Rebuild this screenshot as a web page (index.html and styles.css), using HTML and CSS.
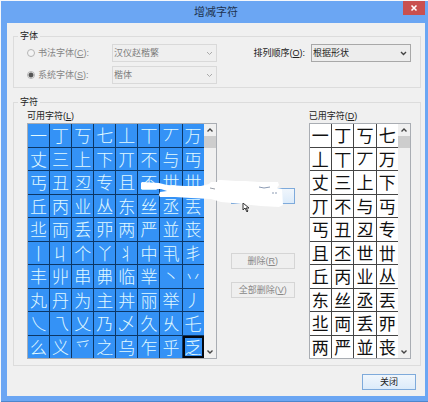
FILE: index.html
```html
<!DOCTYPE html>
<html lang="zh-CN">
<head>
  <meta charset="UTF-8">
  <meta name="viewport" content="width=device-width, initial-scale=1.0">
  <title>增减字符</title>
  <link rel="stylesheet" href="styles.css">
</head>
<body>
  <div class="dialog">
    <header class="title-bar">
      <h1>增减字符</h1>
      <button class="close-x" aria-label="关闭窗口">
        <svg width="8" height="8" viewBox="0 0 8 8"><path d="M1.5 1.5l5 5M6.5 1.5l-5 5" stroke="#fff" stroke-width="1.6"/></svg>
      </button>
    </header>

    <main class="client">
      <fieldset class="group">
        <legend>字体</legend>
        <div class="font-row">
          <div class="font-options">
            <label class="radio disabled"><input type="radio" name="font" disabled><span>书法字体(<u>C</u>):</span></label>
            <select class="combo" aria-label="书法字体" disabled><option>汉仪赵楷繁</option></select>
            <label class="radio disabled"><input type="radio" name="font" checked disabled><span>系统字体(<u>S</u>):</span></label>
            <select class="combo" aria-label="系统字体" disabled><option>楷体</option></select>
          </div>
          <div class="order">
            <label for="order">排列顺序(<u>O</u>):</label>
            <select class="combo" id="order"><option>根据形状</option></select>
          </div>
        </div>
      </fieldset>

      <fieldset class="group chars">
        <legend>字符</legend>
        <div class="chars-row">
          <section class="column">
            <h2>可用字符(<u>L</u>)</h2>
            <div class="list">
              <div class="cells available" id="available" role="listbox" aria-label="可用字符"></div>
              <div class="scrollbar">
                <button aria-label="向上"><svg width="8" height="6" viewBox="0 0 8 6"><path d="M1.5 4.5L4 2l2.5 2.5"/></svg></button>
                <span class="thumb"></span>
                <button aria-label="向下"><svg width="8" height="6" viewBox="0 0 8 6"><path d="M1.5 1.5L4 4l2.5-2.5"/></svg></button>
              </div>
            </div>
          </section>

          <div class="actions">
            <button class="btn hot add" aria-label="添加"></button>
            <button class="btn" disabled>删除(<u>R</u>)</button>
            <button class="btn" disabled>全部删除(<u>V</u>)</button>
          </div>

          <section class="column">
            <h2>已用字符(<u>D</u>)</h2>
            <div class="list">
              <div class="cells used" id="used" role="listbox" aria-label="已用字符"></div>
              <div class="scrollbar">
                <button aria-label="向上"><svg width="8" height="6" viewBox="0 0 8 6"><path d="M1.5 4.5L4 2l2.5 2.5"/></svg></button>
                <span class="thumb"></span>
                <button aria-label="向下"><svg width="8" height="6" viewBox="0 0 8 6"><path d="M1.5 1.5L4 4l2.5-2.5"/></svg></button>
              </div>
            </div>
          </section>

          <!-- Brush stroke and mouse pointer over the lists -->
          <svg class="scribble" width="144" height="36" viewBox="0 0 144 36">
            <path fill="#fff" d="M0 6L1 5 18 6 26 8 44 9 60 9 68 7 70 5 76 5 77 3 80 3 95 4 104 4 118 5 137 5 138 8 136 11 141 12 142 28 138 30 120 29 110 28 92 26 80 25 70 22 50 21 34 20 19 20 18 18 19 15 26 14 20 12 0 12z"/>
            <path fill="none" stroke="#8c9bb3" stroke-width="1" d="M118 10l5 1 6-1M131 16h2M134 16h2"/>
            <path fill="none" stroke="#9a9fa8" stroke-width="1" d="M69 11l5 1"/>
          </svg>
          <svg class="pointer" width="10" height="11" viewBox="0 0 10 11"><path d="M1 0v7l2-2 2 4 1-1-2-3h3z" fill="#fff" stroke="#333" stroke-width="1"/></svg>
        </div>
      </fieldset>

      <footer class="footer">
        <button class="btn hot close">关闭</button>
      </footer>
    </main>
  </div>

  <script>
    const chars = '一丁丂七丄丅丆万丈三上下丌不与丏丐丑丒专且丕世丗丘丙业丛东丝丞丟丠両丢丣两严並丧' +
      '丨丩个丫丬中丮丯丰丱串丳临丵丶丷丸丹为主丼丽举丿乀乁乂乃乄久乆乇么义乊之乌乍乎乏';

    // Fill a list with one cell per character
    function fillList(id, text) {
      const list = document.getElementById(id);
      for (const ch of text) {
        const cell = document.createElement('span');
        cell.className = 'cell';
        cell.setAttribute('role', 'option');
        cell.textContent = ch;
        list.appendChild(cell);
      }
    }

    fillList('available', chars);
    fillList('used', chars.slice(0, 40));
    document.getElementById('available').lastElementChild.classList.add('current');
  </script>
</body>
</html>
```

FILE: styles.css
```css
* {
  box-sizing: border-box;
}

body {
  margin: 0;
  background: #f4f7fb;
  color: #222;
  font-family: "Liberation Sans", "Noto Sans CJK SC", sans-serif;
  font-size: 9px;
  line-height: 12px;
}

button, select, input {
  font: inherit;
  color: inherit;
  margin: 0;
}

/* Window frame */
.dialog {
  margin: 1px 0 1px 1px;
  padding: 0 3px 5px 6px;
  background: #6ba6f3;
  border-bottom: 1px solid #4d86cc;
}

.title-bar {
  display: grid;
  grid-template-columns: 1fr auto 1fr;
  height: 22px;
}

.title-bar h1 {
  grid-column: 2;
  margin: 0;
  font-size: 11px;
  font-weight: normal;
  line-height: 22px;
  color: #1d3350;
}

.close-x {
  justify-self: end;
  display: flex;
  align-items: center;
  justify-content: center;
  width: 22px;
  height: 14px;
  padding: 0;
  border: none;
  background: #c9504f;
}

.client {
  padding: 7px 4px 6px 6px;
  background: #f0f0f0;
}

/* Group boxes */
.group {
  min-width: 0;
  margin: 0 0 8px;
  padding: 2px 9px 3px 13px;
  border: 1px solid #dcdcdc;
}

.group legend {
  margin-left: -9px;
  padding: 0 2px;
  height: 12px;
}

.chars {
  padding: 2px 9px 6px 13px;
}

.font-row {
  display: flex;
  justify-content: space-between;
}

.font-options {
  display: grid;
  grid-template-columns: 85px 105px;
  gap: 4px 0;
}

.radio, .order {
  display: flex;
  align-items: center;
}

.radio {
  gap: 3px;
}

.radio input {
  appearance: none;
  width: 8px;
  height: 8px;
  border: 1px solid #b5b5b5;
  border-radius: 50%;
  background: #f4f4f4;
}

.radio input:checked {
  background: radial-gradient(circle, #555 2px, #f4f4f4 3px);
}

.disabled {
  color: #858585;
}

.order {
  align-self: flex-start;
  gap: 6px;
}

.combo {
  appearance: none;
  width: 100%;
  height: 18px;
  padding: 0 1px;
  border: 1px solid #a8a8a8;
  border-radius: 0;
  background: #ededed url("data:image/svg+xml,%3Csvg xmlns='http://www.w3.org/2000/svg' width='7' height='5'%3E%3Cpath d='M1 1l2.5 2.5L6 1' fill='none' stroke='%23444' stroke-width='1.4'/%3E%3C/svg%3E") no-repeat right 3px center;
}

.order .combo {
  width: 100px;
}

.combo:disabled {
  border-color: #d9d9d9;
  background-color: #efefef;
  background-image: url("data:image/svg+xml,%3Csvg xmlns='http://www.w3.org/2000/svg' width='7' height='5'%3E%3Cpath d='M1 1l2.5 2.5L6 1' fill='none' stroke='%23aaa'/%3E%3C/svg%3E");
  color: #7d7d7d;
  opacity: 1;
}

/* Character lists */
.chars-row {
  position: relative;
  display: grid;
  grid-template-columns: 189fr 64px 102fr;
  gap: 14px;
}

.column h2 {
  margin: 0 0 1px;
  font-size: 9px;
  font-weight: normal;
}

.list {
  display: flex;
  height: 236px;
  border: 1px solid #a9adb3;
  background: #f0f0f0;
}

.cells {
  flex: 1;
  display: grid;
  grid-auto-rows: 1fr;
  gap: 1px;
  font-family: "Noto Sans CJK SC", sans-serif;
  font-size: 17px;
  line-height: 22px;
}

.available {
  grid-template-columns: repeat(8, 1fr);
  background: #0c3766;
  color: #e2faff;
  font-weight: 300;
}

.used {
  grid-template-columns: repeat(4, 1fr);
  background: #444;
  color: #111;
}

.cell {
  display: flex;
  align-items: center;
  justify-content: center;
  min-width: 0;
  min-height: 0;
  background: #fff;
}

.available .cell {
  background: #3492f6;
}

.available .current {
  border: 2px solid #05080f;
}

.scrollbar {
  display: flex;
  flex-direction: column;
  width: 12px;
}

.scrollbar button {
  display: flex;
  align-items: center;
  justify-content: center;
  height: 12px;
  padding: 0;
  border: none;
  background: none;
}

.scrollbar button:last-child {
  margin-top: auto;
}

.scrollbar path {
  fill: none;
  stroke: #444;
  stroke-width: 1.4;
}

.thumb {
  height: 12px;
  background: #cdcdcd;
}

/* Buttons */
.btn {
  height: 16px;
  padding: 0;
  border: 1px solid #acacac;
  background: #ebebeb;
  line-height: 14px;
}

.btn:disabled {
  border-color: #d5d5d5;
  background: #efefef;
  color: #888;
}

.hot {
  border-color: #7eaadb;
  background: linear-gradient(#f0f6fc, #dcebfa);
}

.actions {
  display: flex;
  flex-direction: column;
  gap: 13px;
  padding-top: 78px;
}

.add {
  margin-bottom: 36px;
}

.footer {
  display: flex;
  justify-content: flex-end;
}

.close {
  width: 54px;
  margin-right: 5px;
}

.scribble {
  position: absolute;
  left: 114px;
  top: 67px;
}

.pointer {
  position: absolute;
  left: 215px;
  top: 93px;
}
```
